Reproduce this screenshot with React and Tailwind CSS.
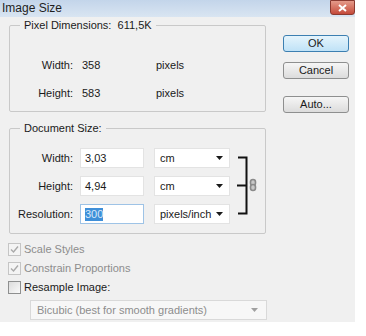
import React from "react";

const font = { fontFamily: '"Liberation Sans", Arial, sans-serif' };

function Arrow() {
  return (
    <svg width="7" height="4" viewBox="0 0 7 4" className="shrink-0">
      <path d="M0 0 H7 L3.5 4 Z" fill="#1a1a1a" />
    </svg>
  );
}

function Select({ value }) {
  return (
    <div className="w-[76px] h-[20px] bg-white border border-[#e3e3e3] flex items-center pl-[5px] pr-[6px] text-[11px] text-[#1a1a1a]">
      <span className="flex-1">{value}</span>
      <Arrow />
    </div>
  );
}

function Input({ value, focused }) {
  return (
    <div
      className={
        "w-[64px] h-[20px] bg-white border flex items-center pl-[4px] text-[11px] text-[#1a1a1a] " +
        (focused ? "border-[#9ec3e6]" : "border-[#e3e3e3]")
      }
    >
      {focused ? (
        <span className="bg-[#3f8fd8] text-[#d8e8f8] leading-[13px]">{value}</span>
      ) : (
        value
      )}
    </div>
  );
}

function Button({ children, primary }) {
  return (
    <div
      className={
        "w-[66px] h-[17px] rounded-[3px] border flex items-center justify-center text-[11px] text-[#1a1a1a] " +
        (primary
          ? "border-[#3c7fb1] bg-gradient-to-b from-[#e5f4fc] to-[#bfe2f7]"
          : "border-[#8e8f8f] bg-gradient-to-b from-[#f6f6f6] to-[#dcdcdc]")
      }
    >
      {children}
    </div>
  );
}

function Check({ checked, disabled, label }) {
  return (
    <div className="flex items-center h-[19px]">
      <div
        className={
          "w-[13px] h-[13px] border flex items-center justify-center " +
          (disabled ? "border-[#c5c5c5] bg-[#f4f4f4]" : "border-[#8e8f8f] bg-gradient-to-br from-[#dcdcdc] to-[#fafafa]")
        }
      >
        {checked && (
          <svg width="9" height="9" viewBox="0 0 9 9">
            <path d="M1 4.5 L3.5 7 L8 1.5" stroke="#a9a9a9" strokeWidth="1.4" fill="none" />
          </svg>
        )}
      </div>
      <span className={"ml-[3px] text-[11px] " + (disabled ? "text-[#8d8d8d]" : "text-[#1a1a1a]")}>{label}</span>
    </div>
  );
}

export default function App() {
  return (
    <div className="w-[366px] h-[336px] bg-white" style={font}>
      <div className="w-[355px] h-[322px] bg-[#f0f0f0] flex flex-col">
        {/* Title bar */}
        <div className="h-[17px] flex items-start bg-gradient-to-b from-[#c3d5ea] to-[#d9e5f2]">
          <span className="ml-[2px] mt-[1px] text-[12px] leading-[15px] text-[#1e1e1e]">Image Size</span>
          <div className="ml-auto w-[25px] h-[15px] rounded-b-[3px] bg-gradient-to-b from-[#e49a8a] to-[#c4493a] border border-[#8a3a30] flex items-center justify-center">
            <svg width="9" height="8" viewBox="0 0 9 8">
              <path d="M1 1 L8 7 M8 1 L1 7" stroke="white" strokeWidth="2" />
            </svg>
          </div>
        </div>

        <div className="flex">
          {/* Left column */}
          <div className="ml-[9px] w-[257px] flex flex-col">
            <fieldset className="mt-[1px] h-[94px] border border-[#c9c9c9] rounded-[2px] px-0">
              <legend className="ml-[10px] px-[4px] text-[11px] text-[#1a1a1a] leading-[14px]">
                Pixel Dimensions:&nbsp; 611,5K
              </legend>
              <div className="grid grid-cols-[63px_83px_auto] items-center text-[11px] text-[#1a1a1a] mt-[27px] gap-y-[16px]">
                <span className="text-right leading-[12px]">Width:</span>
                <span className="pl-[9px] leading-[12px]">358</span>
                <span className="leading-[12px]">pixels</span>
                <span className="text-right leading-[12px]">Height:</span>
                <span className="pl-[9px] leading-[12px]">583</span>
                <span className="leading-[12px]">pixels</span>
              </div>
            </fieldset>

            <fieldset className="mt-[9px] h-[113px] border border-[#c9c9c9] rounded-[2px] px-0">
              <legend className="ml-[10px] px-[4px] text-[11px] text-[#1a1a1a] leading-[14px]">
                Document Size:
              </legend>
              <div className="flex mt-[13px]">
                <div className="grid grid-cols-[63px_71px_76px] items-center gap-y-[8px] text-[11px] text-[#1a1a1a]">
                  <span className="text-right">Width:</span>
                  <div className="ml-[7px]"><Input value="3,03" /></div>
                  <div className="ml-[10px]"><Select value="cm" /></div>
                  <span className="text-right">Height:</span>
                  <div className="ml-[7px]"><Input value="4,94" /></div>
                  <div className="ml-[10px]"><Select value="cm" /></div>
                  <span className="text-right">Resolution:</span>
                  <div className="ml-[7px]"><Input value="300" focused /></div>
                  <div className="ml-[10px]"><Select value="pixels/inch" /></div>
                </div>
                <svg width="26" height="68" viewBox="0 0 26 68" className="ml-[14px]">
                  <path d="M4 9.5 H12.5 V65.5 H4" stroke="#111" strokeWidth="2" fill="none" />
                  <path d="M3 37.5 H12" stroke="#111" strokeWidth="2" />
                  <rect x="16.5" y="31.5" width="5" height="6" rx="2.5" stroke="#8a8a8a" strokeWidth="1.6" fill="#c8c8c8" />
                  <rect x="16.5" y="36.5" width="5" height="6" rx="2.5" stroke="#8a8a8a" strokeWidth="1.6" fill="#c8c8c8" />
                </svg>
              </div>
            </fieldset>

            <div className="mt-[6px] -ml-[1px] flex flex-col">
              <Check checked disabled label="Scale Styles" />
              <Check checked disabled label="Constrain Proportions" />
              <Check label="Resample Image:" />
            </div>
            <div className="ml-[21px] mt-[3px] w-[237px] h-[20px] border border-[#d9d9d9] bg-[#f7f7f7] flex items-center pl-[6px] pr-[8px] text-[11px] text-[#8d8d8d]">
              <span className="flex-1">Bicubic (best for smooth gradients)</span>
              <svg width="7" height="4" viewBox="0 0 7 4">
                <path d="M0 0 H7 L3.5 4 Z" fill="#a0a0a0" />
              </svg>
            </div>
          </div>

          {/* Right column */}
          <div className="ml-auto mr-[6px] mt-[18px] flex flex-col gap-y-[10px]">
            <Button primary>OK</Button>
            <Button>Cancel</Button>
            <div className="mt-[7px]"><Button>Auto...</Button></div>
          </div>
        </div>
      </div>
    </div>
  );
}
